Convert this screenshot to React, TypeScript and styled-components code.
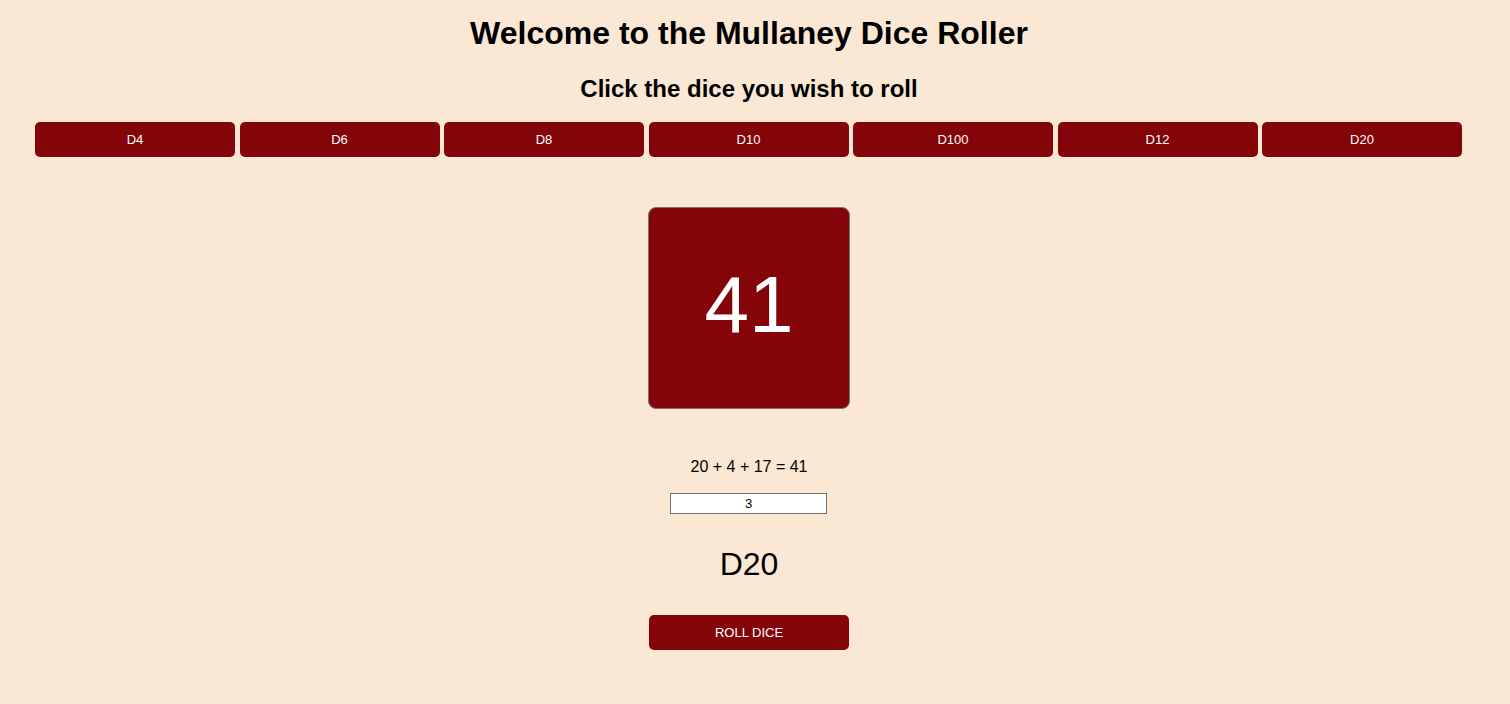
import React, { useState } from 'react';
import styled, { createGlobalStyle } from 'styled-components';

const GlobalStyle = createGlobalStyle`
  body {
    margin: 0;
    background-color: #fae8d4;
    font-family: "Liberation Sans", Arial, Helvetica, sans-serif;
    color: #000;
  }
`;

const brand = '#83050a';

const Page = styled.div`
  max-width: 1480px;
  margin: 0 7px 0 9px;
  padding-top: 15px;
  display: flex;
  flex-direction: column;
  align-items: center;
`;

const Title = styled.h1`
  margin: 0;
  font-size: 32px;
  line-height: 37px;
  font-weight: bold;
`;

const Subtitle = styled.h2`
  margin: 23px 0 0;
  font-size: 24px;
  line-height: 28px;
  font-weight: bold;
`;

const DiceRow = styled.div`
  display: flex;
  gap: 4.5px;
  margin-top: 19px;
  margin-right: 1px;
`;

const Button = styled.button<{ $top?: number }>`
  width: 200px;
  height: 35px;
  margin-top: ${p => p.$top ?? 0}px;
  border: none;
  border-radius: 5px;
  background-color: ${brand};
  color: white;
  font-family: inherit;
  font-size: 13px;
  cursor: pointer;
`;

const Die = styled.div`
  margin-top: 50px;
  width: 200px;
  height: 194px;
  padding-bottom: 6px;
  box-sizing: content-box;
  border: 1px solid #777;
  border-radius: 8px;
  background-color: ${brand};
  color: white;
  font-size: 80px;
  display: flex;
  align-items: center;
  justify-content: center;
`;

const Sum = styled.div`
  margin-top: 49px;
  font-size: 16px;
  line-height: 18px;
`;

const CountInput = styled.input`
  margin-top: 17px;
  margin-right: 1px;
  width: 157px;
  height: 21px;
  box-sizing: border-box;
  border: 1px solid #767676;
  background: white;
  text-align: center;
  font-family: inherit;
  font-size: 13px;
  padding: 0 2px;
`;

const DiceName = styled.div`
  margin-top: 32px;
  font-size: 32px;
  line-height: 37px;
`;

const dice = [4, 6, 8, 10, 100, 12, 20];

export default function App() {
  const [sides, setSides] = useState(20);
  const [count, setCount] = useState('3');
  const [rolls, setRolls] = useState([20, 4, 17]);

  const total = rolls.reduce((a, b) => a + b, 0);

  const roll = () => {
    const n = Math.max(1, parseInt(count, 10) || 1);
    setRolls(Array.from({ length: n }, () => 1 + Math.floor(Math.random() * sides)));
  };

  return (
    <>
      <GlobalStyle />
      <Page>
        <Title>Welcome to the Mullaney Dice Roller</Title>
        <Subtitle>Click the dice you wish to roll</Subtitle>
        <DiceRow>
          {dice.map(d => (
            <Button key={d} onClick={() => setSides(d)}>D{d}</Button>
          ))}
        </DiceRow>
        <Die>{total}</Die>
        <Sum>{rolls.join(' + ')} = {total}</Sum>
        <CountInput value={count} onChange={e => setCount(e.target.value)} />
        <DiceName>D{sides}</DiceName>
        <Button $top={32} onClick={roll}>ROLL DICE</Button>
      </Page>
    </>
  );
}
